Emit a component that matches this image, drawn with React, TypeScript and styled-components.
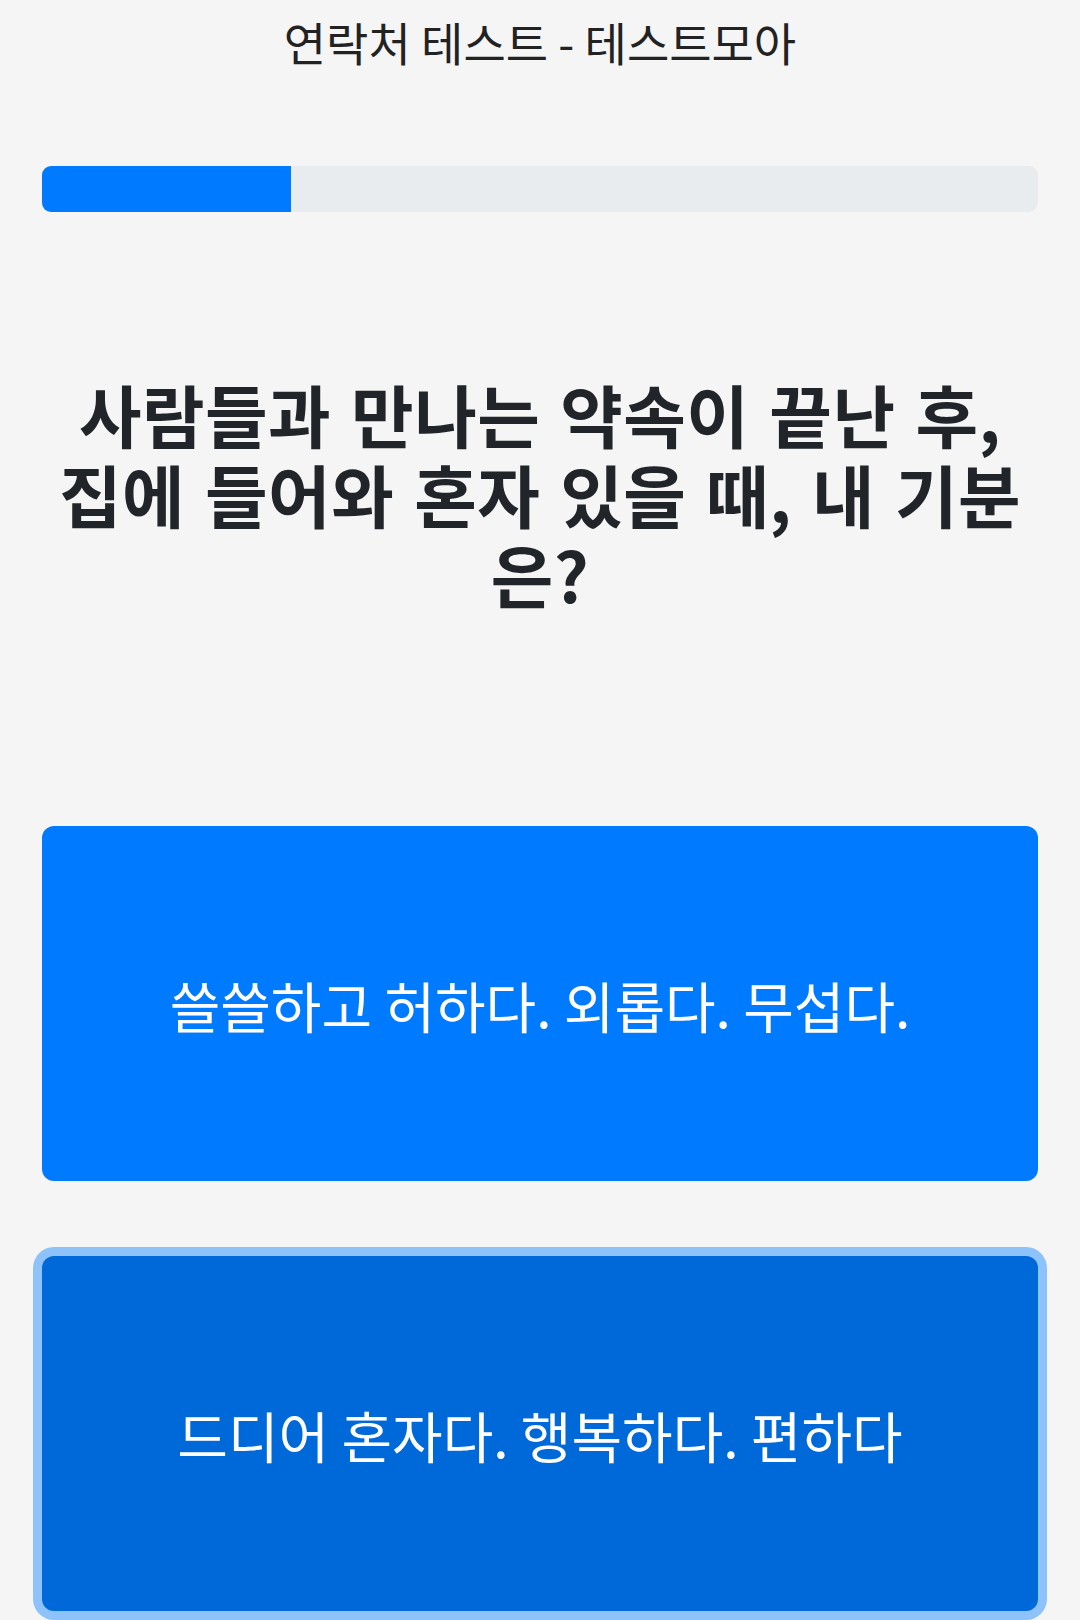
import styled, { createGlobalStyle } from "styled-components";

const GlobalStyle = createGlobalStyle`
  html, body {
    margin: 0;
    padding: 0;
    background: #f5f5f5;
  }
  body {
    font-family: "Noto Sans CJK KR", "Noto Sans", sans-serif;
    color: #212529;
  }
`;

const answers = [
  { text: "쓸쓸하고 허하다. 외롭다. 무섭다.", focused: false },
  { text: "드디어 혼자다. 행복하다. 편하다", focused: true },
];

const App = () => {
  const progress = 25;

  return (
    <>
      <GlobalStyle />
      <Page>
        <Title>연락처 테스트 - 테스트모아</Title>
        <Track>
          <Fill style={{ width: `${progress}%` }} />
        </Track>
        <Question>
          사람들과 만나는 약속이 끝난 후, 집에 들어와 혼자 있을 때, 내 기분은?
        </Question>
        <Answers>
          {answers.map((a) => (
            <Answer key={a.text} focused={a.focused}>
              {a.text}
            </Answer>
          ))}
        </Answers>
      </Page>
    </>
  );
};

export default App;

const Page = styled.div`
  display: flex;
  flex-direction: column;
  padding: 0 42px;
  min-height: 1620px;
  box-sizing: border-box;
`;

const Title = styled.h1`
  margin: 0;
  font-size: 46px;
  font-weight: 400;
  line-height: 82px;
  text-align: center;
  color: #222;
`;

const Track = styled.div`
  margin-top: 84px;
  height: 46px;
  border-radius: 9px;
  background: #e9ecef;
  overflow: hidden;
  display: flex;
`;

const Fill = styled.div`
  height: 100%;
  background: #007bff;
`;

const Question = styled.h2`
  margin: 162px 0 0;
  font-size: 68px;
  font-weight: 700;
  line-height: 80px;
  letter-spacing: 0.5px;
  word-spacing: 4px;
  text-align: center;
  color: #212529;
`;

const Answers = styled.div`
  display: flex;
  flex-direction: column;
  gap: 75px;
  margin-top: 212px;
`;

const Answer = styled.button<{ focused: boolean }>`
  height: 355px;
  border: none;
  border-radius: 12px;
  font-family: "Noto Sans CJK KR", "Noto Sans", sans-serif;
  font-size: 55px;
  font-weight: 400;
  color: #fff;
  background: ${(p) => (p.focused ? "#0069d9" : "#007bff")};
  box-shadow: ${(p) =>
    p.focused ? "0 0 0 9px rgba(38, 143, 255, 0.5)" : "none"};
  cursor: pointer;
`;
